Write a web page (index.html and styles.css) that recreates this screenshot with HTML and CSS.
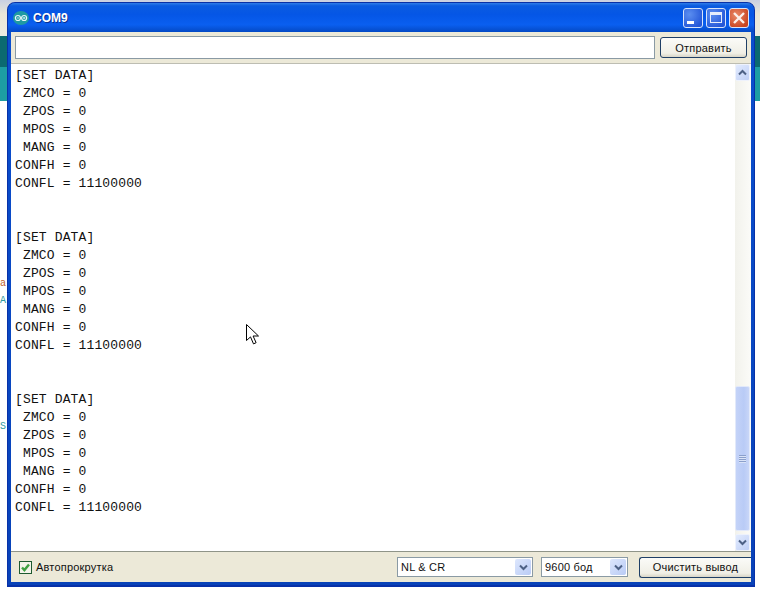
FILE: index.html
```html
<!DOCTYPE html>
<html lang="ru">
<head>
<meta charset="utf-8">
<title>COM9</title>
<link rel="stylesheet" href="styles.css">
</head>
<body>
<div class="desktop">
  <div class="backdrop">
    <div class="bd-light"></div>
    <div class="bd-dark"></div>
    <div class="bd-teal"></div>
    <div class="bd-white"></div>
  </div>
  <span class="peek peek-a">a</span>
  <span class="peek peek-b">A</span>
  <span class="peek peek-c">S</span>
  <div class="window">
    <div class="titlebar">
      <svg class="appicon" width="16" height="14" viewBox="0 0 16 14">
        <ellipse cx="8" cy="7" rx="8" ry="7" fill="#1f9aa2"/>
        <circle cx="4.9" cy="7" r="2.5" fill="none" stroke="#e8f6f6" stroke-width="1.2"/>
        <circle cx="11.1" cy="7" r="2.5" fill="none" stroke="#e8f6f6" stroke-width="1.2"/>
        <path d="M3.8 7h2.2M10 7h2.2M11.1 5.9v2.2" stroke="#e8f6f6" stroke-width=".8"/>
      </svg>
      <span class="title">COM9</span>
      <div class="winbtns">
        <div class="winbtn"><span class="glyph-min"></span></div>
        <div class="winbtn"><span class="glyph-max"></span></div>
        <div class="winbtn winbtn-close">
          <svg width="20" height="20" viewBox="0 0 20 20"><path d="M5 5l10 10M15 5l-10 10" stroke="#fbeee8" stroke-width="2.4"/></svg>
        </div>
      </div>
    </div>
    <div class="client">
      <div class="sendrow">
        <div class="field"></div>
        <div class="btn btn-send">Отправить</div>
      </div>
      <div class="output">
        <pre class="log">[SET DATA]
 ZMCO = 0
 ZPOS = 0
 MPOS = 0
 MANG = 0
CONFH = 0
CONFL = 11100000


[SET DATA]
 ZMCO = 0
 ZPOS = 0
 MPOS = 0
 MANG = 0
CONFH = 0
CONFL = 11100000


[SET DATA]
 ZMCO = 0
 ZPOS = 0
 MPOS = 0
 MANG = 0
CONFH = 0
CONFL = 11100000</pre>
        <div class="scrollbar">
          <div class="sb-btn"><svg width="9" height="7" viewBox="0 0 9 7"><path d="M1 5.5l3.5-3.5 3.5 3.5" fill="none" stroke="#4d6185" stroke-width="2"/></svg></div>
          <div class="sb-track">
            <div class="sb-thumb"><span class="grip"></span></div>
          </div>
          <div class="sb-btn"><svg width="9" height="7" viewBox="0 0 9 7"><path d="M1 1.5l3.5 3.5 3.5-3.5" fill="none" stroke="#4d6185" stroke-width="2"/></svg></div>
        </div>
      </div>
      <div class="statusbar">
        <div class="autoscroll">
          <span class="check"><svg width="11" height="11" viewBox="0 0 11 11"><path d="M2 5.5l2.4 2.6 4.6-5.6" fill="none" stroke="#3fa142" stroke-width="2.4"/></svg></span>
          <span>Автопрокрутка</span>
        </div>
        <div class="combo combo-line"><span>NL &amp; CR</span><span class="drop"><svg width="9" height="7" viewBox="0 0 9 7"><path d="M1 1.5l3.5 3.5 3.5-3.5" fill="none" stroke="#4d6185" stroke-width="2"/></svg></span></div>
        <div class="combo combo-baud"><span>9600 бод</span><span class="drop"><svg width="9" height="7" viewBox="0 0 9 7"><path d="M1 1.5l3.5 3.5 3.5-3.5" fill="none" stroke="#4d6185" stroke-width="2"/></svg></span></div>
        <div class="btn btn-clear">Очистить вывод</div>
      </div>
    </div>
  </div>
  <svg class="cursor" width="14" height="22" viewBox="0 0 14 22"><path d="M.5.5v16l4-3.6 3 7 2.6-1.2-3-6.7h5.4z" fill="#fff" stroke="#000"/></svg>
</div>
</body>
</html>
```
FILE: styles.css
```css
* { box-sizing: border-box; }
html, body { margin: 0; padding: 0; }
body { width: 760px; height: 590px; overflow: hidden; background: #fff; }
.desktop { position: relative; width: 760px; height: 590px; overflow: hidden; font-family: "Liberation Sans", Arial, sans-serif; }
.backdrop { position: absolute; inset: 0; display: flex; flex-direction: column; }
.bd-light { height: 36px; background: linear-gradient(180deg,#c9d0e2 0,#e9e7d8 14px,#ecebe0 100%); }
.bd-dark { height: 31px; background: #0b6a70; }
.bd-teal { height: 34px; background: #1d9ea3; }
.bd-white { flex: 1; background: #fff; }
.peek { position: absolute; left: 0; font: 10px/12px "Liberation Mono", monospace; }
.peek-a { top: 278px; color: #c0602a; }
.peek-b { top: 295px; color: #2f9aa0; }
.peek-c { top: 421px; color: #2f9aa0; }
.window { position: absolute; left: 7px; top: 2px; width: 748px; height: 585px; display: flex; flex-direction: column; padding-bottom: 3px; background: linear-gradient(180deg,#0a4fd0,#0842b8); border-radius: 8px 8px 0 0; border: 1px solid #0831a8; border-width: 1px 1px 2px; }
.titlebar { height: 29px; flex: none; display: flex; align-items: center; padding: 0 5px; border-radius: 7px 7px 0 0; background: linear-gradient(180deg,#2f7de8 0,#0a5be0 10%,#0556e6 40%,#0a5ff0 75%,#0449c4 100%); }
.appicon { flex: none; }
.title { margin-left: 4px; color: #fff; font: bold 12px "Liberation Sans", sans-serif; text-shadow: 1px 1px 0 #0a2f90; }
.winbtns { margin-left: auto; display: flex; gap: 3px; }
.winbtn { width: 20px; height: 20px; border: 1px solid #d8e4fa; border-radius: 3px; background: radial-gradient(circle at 30% 30%,#5b8ef0,#2457d8 80%); display: flex; align-items: center; justify-content: center; position: relative; }
.winbtn-close { background: radial-gradient(circle at 35% 35%,#ea8a68,#c8431f 80%); }
.winbtn-close svg { position: absolute; left: -1px; top: -1px; }
.glyph-min { width: 7px; height: 3px; background: #fff; margin: 9px 5px 0 0; }
.glyph-max { width: 12px; height: 11px; border: 1px solid #e6eefc; border-top-width: 3px; }
.client { flex: 1; display: flex; flex-direction: column; margin: 0 3px; background: #ece9d8; min-height: 0; }
.sendrow { height: 31px; flex: none; display: flex; align-items: center; padding: 0 4px; gap: 5px; }
.field { width: 640px; height: 23px; background: #fff; border: 1px solid #8a9aa4; }
.btn { display: flex; align-items: center; justify-content: center; background: linear-gradient(180deg,#fbfbf8,#f0efe6 80%,#d8d5c6); border: 1px solid #1f3f66; border-radius: 3px; font-size: 11px; color: #111; letter-spacing: .2px; }
.btn-send { width: 87px; height: 21px; }
.output { flex: 1; min-height: 0; display: flex; background: #fff; border-top: 1px solid #bdbdb2; border-bottom: 1px solid #8f9488; }
.log { flex: 1; margin: 0; padding: 3px 0 0 4px; font: 13px/18px "Liberation Mono", "Courier New", monospace; color: #111; letter-spacing: .14px; }
.scrollbar { width: 16px; flex: none; padding-right: 1px; display: flex; flex-direction: column; background: linear-gradient(90deg,#f2f2ec,#fbfbf8); }
.sb-btn { height: 17px; flex: none; background: linear-gradient(135deg,#e2ebfe,#c0d0f6); border: 1px solid #eef2fc; border-radius: 2px; display: flex; align-items: center; justify-content: center; }
.sb-track { flex: 1; display: flex; flex-direction: column; justify-content: flex-end; padding-bottom: 3px; }
.sb-thumb { height: 145px; background: linear-gradient(90deg,#c4d3f8,#b9cbf6 60%,#c8d6f8); border: 1px solid #e2e9fa; border-radius: 2px; display: flex; align-items: center; justify-content: center; }
.grip { width: 7px; height: 8px; background: repeating-linear-gradient(180deg,#8ba0cc 0 1px,#dbe4f8 1px 2px); }
.statusbar { height: 30px; flex: none; display: flex; align-items: center; font-size: 11px; color: #111; padding-left: 8px; }
.autoscroll { display: flex; align-items: center; gap: 4px; width: 378px; letter-spacing: .2px; }
.check { width: 13px; height: 13px; border: 1px solid #1d5a30; background: #f4f4ea; display: flex; align-items: center; justify-content: center; }
.combo { height: 20px; display: flex; align-items: center; justify-content: space-between; background: #fff; border: 1px solid #8a9aa4; padding: 0 1px 0 3px; letter-spacing: .2px; }
.combo-line { width: 136px; }
.combo-baud { width: 87px; margin-left: 8px; }
.drop { width: 16px; height: 16px; background: linear-gradient(135deg,#dde7fd,#b9cbf5); border-radius: 2px; display: flex; align-items: center; justify-content: center; }
.btn-clear { width: 112px; height: 21px; margin-left: 11px; border-right: 0; border-radius: 3px 0 0 3px; }
.cursor { position: absolute; left: 246px; top: 324px; }
```
